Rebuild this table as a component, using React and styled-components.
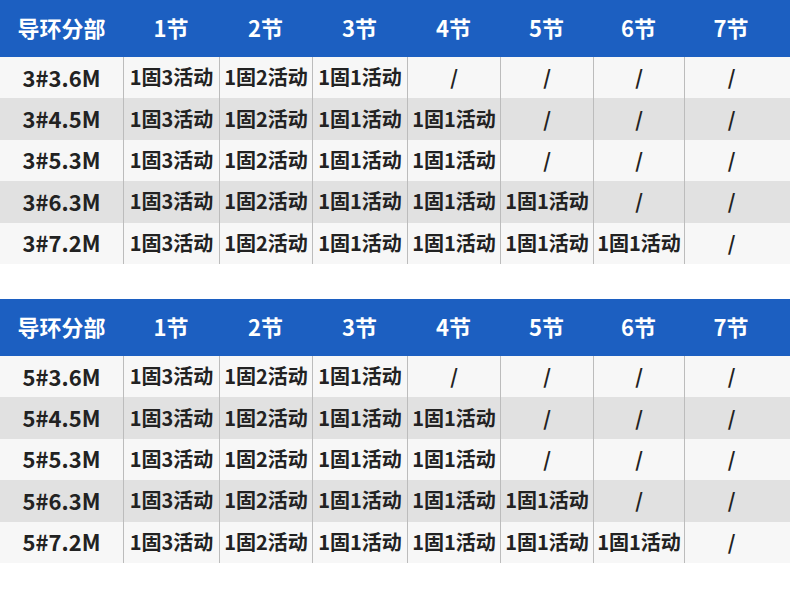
import React from 'react';
import styled, { createGlobalStyle } from 'styled-components';

const GlobalStyle = createGlobalStyle`
  html, body {
    margin: 0;
    padding: 0;
    background: #ffffff;
  }
  body {
    font-family: "Noto Sans CJK SC", "Noto Sans", sans-serif;
  }
`;

const Page = styled.div`
  width: 790px;
  height: 602px;
  display: flex;
  flex-direction: column;
  gap: 35px;
  background: #fff;
`;

const Table = styled.div`
  display: grid;
  grid-template-columns: 123px 96px 93px 95px 93px 93px 91px 1fr;
  grid-template-rows: 57px repeat(5, 41.4px);
`;

const HeadCell = styled.div`
  background: #1c5fc1;
  color: #fff;
  font-size: 22px;
  font-weight: 700;
  display: flex;
  align-items: center;
  justify-content: center;
  padding-right: ${p => (p.$last ? '12px' : '0')};
  padding-bottom: 3px;
`;

const Cell = styled.div`
  background: ${p => (p.$dark ? '#e1e1e1' : '#f7f7f7')};
  color: #222;
  font-size: ${p => (p.$first ? '22px' : '20px')};
  font-weight: 700;
  display: flex;
  align-items: center;
  justify-content: center;
  white-space: nowrap;
  border-left: ${p => (p.$first ? 'none' : '1px solid #bcbcbc')};
  padding-right: ${p => (p.$last ? '12px' : '0')};
  padding-bottom: 2px;
`;

const heads = ['导环分部', '1节', '2节', '3节', '4节', '5节', '6节', '7节'];

const pattern = [
  ['1固3活动', '1固2活动', '1固1活动', '/', '/', '/', '/'],
  ['1固3活动', '1固2活动', '1固1活动', '1固1活动', '/', '/', '/'],
  ['1固3活动', '1固2活动', '1固1活动', '1固1活动', '/', '/', '/'],
  ['1固3活动', '1固2活动', '1固1活动', '1固1活动', '1固1活动', '/', '/'],
  ['1固3活动', '1固2活动', '1固1活动', '1固1活动', '1固1活动', '1固1活动', '/'],
];

const sizes = ['3.6M', '4.5M', '5.3M', '6.3M', '7.2M'];

const SpecTable = ({ prefix }) => (
  <Table>
    {heads.map((h, i) => (
      <HeadCell key={h} $last={i === heads.length - 1}>{h}</HeadCell>
    ))}
    {pattern.map((row, r) => (
      <React.Fragment key={r}>
        <Cell $first $dark={r % 2 === 1}>{prefix}#{sizes[r]}</Cell>
        {row.map((v, c) => (
          <Cell key={c} $dark={r % 2 === 1} $last={c === row.length - 1}>{v}</Cell>
        ))}
      </React.Fragment>
    ))}
  </Table>
);

export default function App() {
  return (
    <>
      <GlobalStyle />
      <Page>
        <SpecTable prefix="3" />
        <SpecTable prefix="5" />
      </Page>
    </>
  );
}
